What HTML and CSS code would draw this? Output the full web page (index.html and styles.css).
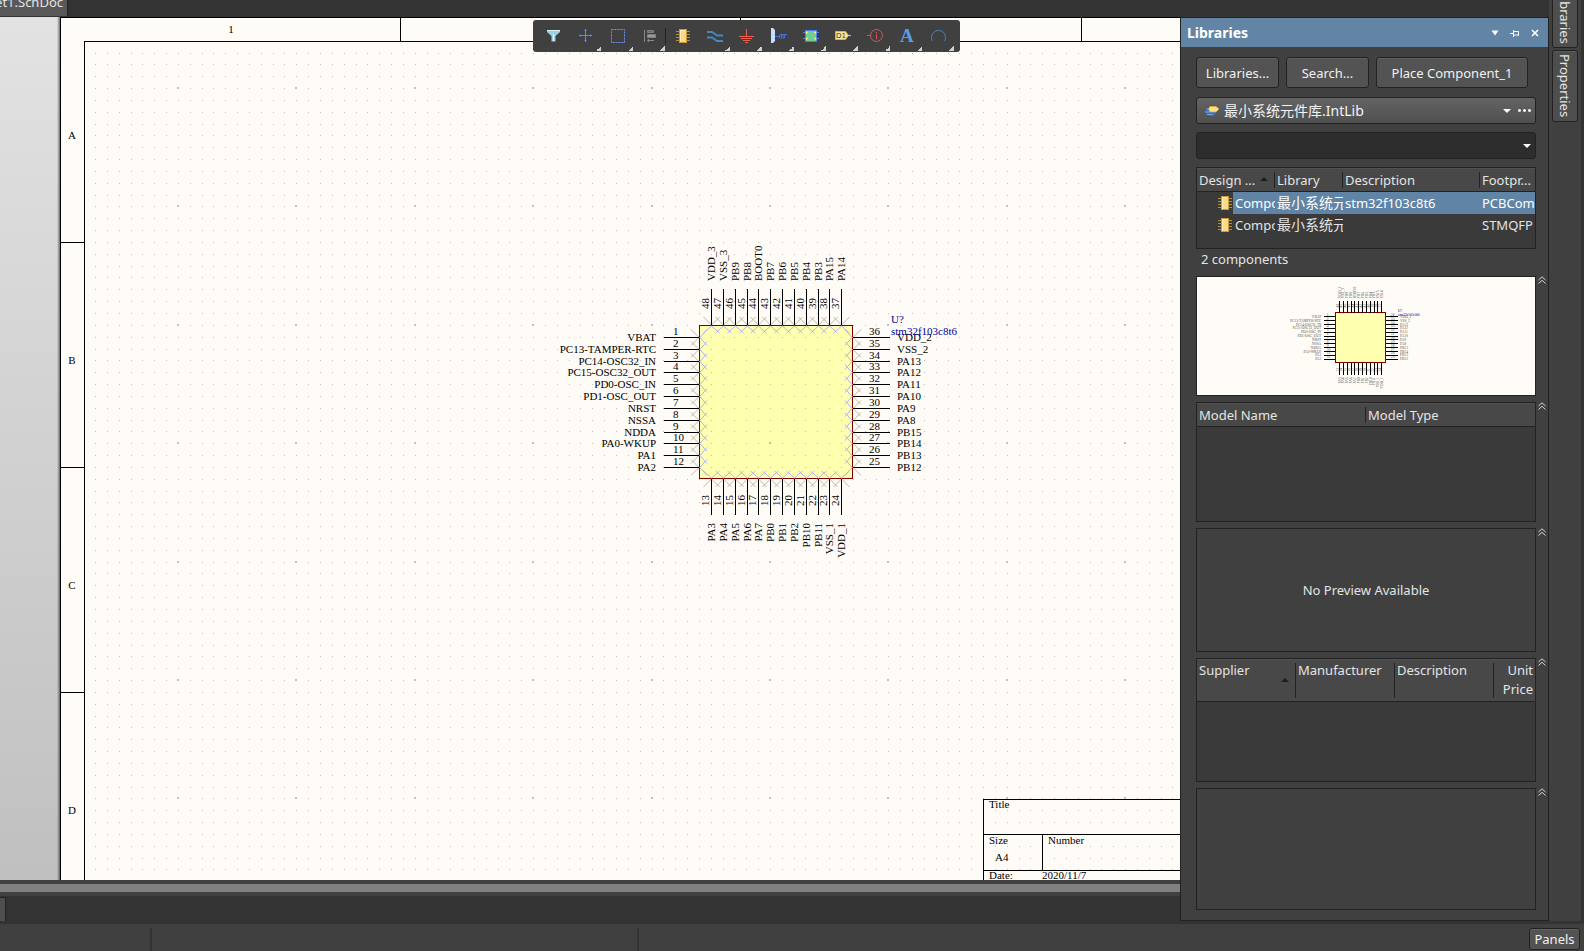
FILE: index.html
```html
<!DOCTYPE html>
<html lang="zh-CN">
<head>
<meta charset="utf-8">
<title>Schematic editor</title>
<link rel="stylesheet" href="styles.css">
</head>
<body>
<svg class="defs" aria-hidden="true">
  <symbol id="chip" viewBox="0 0 14 14">
    <path d="M0 2.5h14M0 5.5h14M0 8.5h14M0 11.5h14" stroke="#b08f35"/>
    <rect x="3.5" y=".5" width="7" height="13" fill="#fbd988" stroke="#c99a35"/>
    <path d="M4.5 13V1.500h5" fill="none" stroke="#ffedb8"/>
  </symbol>
  <symbol id="fold" viewBox="0 0 8 8">
    <path d="M.5 4L4 .8 7.500 4M.5 7.500L4 4.300 7.500 7.500" fill="none" stroke="#d4d4d4"/>
  </symbol>
</svg>
<div class="app">
  <div class="workspace">
    <main class="main">
      <div class="doc-tabs"><button class="doc-tab" type="button">et1.SchDoc</button></div>
      <div class="canvas">
        <svg class="sheet" id="sheet" role="img" aria-label="Schematic sheet"></svg>
        <div class="toolbar" role="toolbar" aria-label="Active bar">
          <button class="tool" type="button" aria-label="Filter"><svg viewBox="0 0 32 32"><path d="M10 10h13v2l-4.500 4v5.500h-4V16L10 12z" fill="#9fd0e2"/><path d="M10 10.500h13" stroke="#d9f2fa"/><path d="M16.500 14v7" stroke="#e4f8ff"/></svg></button>
          <button class="tool more" type="button" aria-label="Move"><svg viewBox="0 0 32 32"><path d="M10 15.500h13M16.500 9v13M15.500 10.500h2M15.500 20.500h2M11.500 14.500v2M21.500 14.500v2" stroke="#6488e8"/></svg></button>
          <button class="tool more" type="button" aria-label="Select area"><svg viewBox="0 0 32 32"><rect x="10.500" y="9.500" width="13" height="13" fill="none" stroke="#7391ee" stroke-dasharray="2 1"/></svg></button>
          <button class="tool more" type="button" aria-label="Align"><svg viewBox="0 0 32 32"><path d="M11.500 10v12" stroke="#858585"/><path d="M14.500 10.500h6v2h-6z" fill="#6c6c6c" stroke="#808080"/><path d="M14.500 14.500h8v3h-8z" fill="#999" stroke="#808080"/><path d="M14 20.500l2-2v1.500h5v1h-5v1.500z" fill="#8a8a8a"/></svg></button>
          <span class="tool-split"></span>
          <button class="tool" type="button" aria-label="Place part"><svg viewBox="0 0 32 32"><use href="#chip" x="10" y="9" width="14" height="14"/></svg></button>
          <button class="tool more" type="button" aria-label="Place wire"><svg viewBox="0 0 32 32"><path d="M9 12h5l5 3.500h6M9 17.500h5l5 3.500h6" fill="none" stroke="#4a86bd" stroke-width="2"/></svg></button>
          <button class="tool more" type="button" aria-label="Place ground"><svg viewBox="0 0 32 32"><path d="M16.500 9v7M9 16.500h15M11 18.500h11M13 20.500h7M15 22.500h3" stroke="#f0604f"/></svg></button>
          <button class="tool more" type="button" aria-label="Place harness"><svg viewBox="0 0 32 32"><path d="M9 8h2l2 2v11l-2 2H9z" fill="#c4dfff"/><path d="M13 16.500h4M17 18.500l1-4h2M19.500 18.500l1-4h2.500M22 18.500l1-4h2M20 14.500l-1 4M22.500 14.500l-1 4" fill="none" stroke="#4a70e0"/></svg></button>
          <button class="tool more" type="button" aria-label="Place sheet symbol"><svg viewBox="0 0 32 32"><path d="M9 12.500h3M9 18.500h3M22 12.500h3M22 18.500h3" stroke="#4d7df0"/><rect x="11.500" y="10.500" width="11" height="11" fill="#6fcf93" stroke="#4d7df0"/><path d="M12 11.500l2 1-2 1.500zM12 17.500l2 1-2 1.500zM22 11.500l-2 1 2 1.500zM22 17.500l-2 1 2 1.500z" fill="#ffe873" stroke="#ffe873" stroke-width=".4"/></svg></button>
          <button class="tool more" type="button" aria-label="Place port"><svg viewBox="0 0 32 32"><path d="M9.500 11.500h10l3 4-3 4h-10z" fill="#fbe596" stroke="#d9b04c"/><path d="M22 15.500h3" stroke="#e8c665"/><text x="10" y="18" class="tag-text">D1</text></svg></button>
          <button class="tool more" type="button" aria-label="Place directive"><svg viewBox="0 0 32 32"><circle cx="18.500" cy="15.500" r="6" fill="none" stroke="#d95353"/><path d="M9 15.500h4M18.500 12v1.500M18.500 14.500v4.500" stroke="#d95353"/></svg></button>
          <button class="tool more" type="button" aria-label="Place text"><svg viewBox="0 0 32 32"><text x="10" y="22" class="letter">A</text></svg></button>
          <button class="tool more" type="button" aria-label="Place arc"><svg viewBox="0 0 32 32"><path d="M10.500 21A7 7 0 1 1 22.500 21" fill="none" stroke="#4583bd"/></svg></button>
        </div>
      </div>
      <div class="scroll-strip"></div>
      <div class="editor-tabs"><span class="editor-tab"></span></div>
    </main>

    <aside class="panel">
      <header class="panel-head">
        <h1>Libraries</h1>
        <button type="button" aria-label="Menu"><svg viewBox="0 0 10 10"><path d="M1.500 2.500h7L5 7.500z" fill="#fff"/></svg></button>
        <button type="button" aria-label="Pin"><svg viewBox="0 0 10 10"><path d="M0 5.500h4M3.500 2v7M4 3.500h4.500v4M4 7h5" fill="none" stroke="#fff"/></svg></button>
        <button type="button" aria-label="Close"><svg viewBox="0 0 10 10"><path d="M2 2l6 6M8 2L2 8" stroke="#fff" stroke-width="1.600"/></svg></button>
      </header>
      <div class="panel-body">
        <div class="actions">
          <button class="btn" type="button">Libraries...</button>
          <button class="btn" type="button">Search...</button>
          <button class="btn btn-wide" type="button">Place Component_1</button>
        </div>
        <div class="combo combo-raised">
          <svg class="lib-icon" viewBox="0 0 15 12"><path d="M1 5c-1 3 1 6 5 6 3 0 5-1 5-3L4 4z" fill="#2f6fd0"/><path d="M1 4h4M0 7h5M2 9.500h6" stroke="#6ea6ee"/><path d="M5 1.500h6L14 4l-3 3H5L3.500 4z" fill="#ffe08a" stroke="#d9a53c" stroke-width=".8"/></svg>
          <select class="lib-select" aria-label="Library"><option>最小系统元件库.IntLib</option></select>
          <svg class="arrow" viewBox="0 0 8 4"><path d="M0 0h8L4 4z" fill="#fff"/></svg>
          <button class="dots" type="button" aria-label="More"><svg viewBox="0 0 13 3"><path d="M0 1l1-1h1l1 1v1l-1 1H1L0 2zM5 1l1-1h1l1 1v1l-1 1H6L5 2zM10 1l1-1h1l1 1v1l-1 1h-1l-1-1z" fill="#f2f2f2"/></svg></button>
        </div>
        <div class="combo">
          <input class="filter" type="text" aria-label="Component filter">
          <svg class="arrow" viewBox="0 0 8 4"><path d="M0 0h8L4 4z" fill="#fff"/></svg>
        </div>
        <div class="box box-list components">
          <table>
            <colgroup><col class="c-design"><col class="c-library"><col><col class="c-foot"></colgroup>
            <thead><tr><th>Design ...<svg class="sort" viewBox="0 0 8 4"><path d="M0 4h8L4 0z" fill="#1e1e1e"/></svg></th><th>Library</th><th>Description</th><th>Footpr...</th></tr></thead>
            <tbody>
              <tr class="selected"><td class="design"><div class="part"><svg viewBox="0 0 14 14"><use href="#chip"/></svg><span>Component_1</span></div></td><td class="cjk">最小系统元件库</td><td>stm32f103c8t6</td><td>PCBComponent_1</td></tr>
              <tr><td class="design"><div class="part"><svg viewBox="0 0 14 14"><use href="#chip"/></svg><span>Component_2</span></div></td><td class="cjk">最小系统元件库</td><td></td><td>STMQFP</td></tr>
            </tbody>
          </table>
        </div>
        <p class="count">2 components</p>
        <div class="sections">
          <section class="pane pane-120">
            <div class="box"><svg class="preview" id="preview" viewBox="276 216 1034 361" role="img" aria-label="Symbol preview"></svg></div>
            <button class="fold" type="button" aria-label="Collapse"><svg viewBox="0 0 8 8"><use href="#fold"/></svg></button>
          </section>
          <section class="pane pane-120">
            <div class="box box-list"><table><thead><tr><th>Model Name</th><th>Model Type</th></tr></thead></table></div>
            <button class="fold" type="button" aria-label="Collapse"><svg viewBox="0 0 8 8"><use href="#fold"/></svg></button>
          </section>
          <section class="pane pane-124">
            <div class="box box-empty">No Preview Available</div>
            <button class="fold" type="button" aria-label="Collapse"><svg viewBox="0 0 8 8"><use href="#fold"/></svg></button>
          </section>
          <section class="pane pane-124">
            <div class="box box-list suppliers">
              <table>
                <colgroup><col class="c-sup"><col class="c-sup"><col class="c-sup"><col></colgroup>
                <thead><tr><th>Supplier<svg class="sort" viewBox="0 0 8 4"><path d="M0 4h8L4 0z" fill="#1e1e1e"/></svg></th><th>Manufacturer</th><th>Description</th><th class="num">Unit Price</th></tr></thead>
              </table>
            </div>
            <button class="fold" type="button" aria-label="Collapse"><svg viewBox="0 0 8 8"><use href="#fold"/></svg></button>
          </section>
          <section class="pane pane-122">
            <div class="box"></div>
            <button class="fold" type="button" aria-label="Collapse"><svg viewBox="0 0 8 8"><use href="#fold"/></svg></button>
          </section>
        </div>
      </div>
    </aside>

    <nav class="rail">
      <button class="rail-tab rail-first" type="button">Libraries</button>
      <button class="rail-tab" type="button">Properties</button>
    </nav>
  </div>
  <footer class="status">
    <span class="cell cell-a"></span><span class="cell cell-b"></span>
    <button class="panels" type="button">Panels</button>
  </footer>
</div>
<script src="script.js"></script>
</body>
</html>
```

FILE: styles.css
```css
* { box-sizing: border-box; }
body { margin: 0; background: #333; color: #e4e4e4; font: 13px/18px "Noto Sans", "Noto Sans CJK SC", sans-serif; }
button, input, select { font: inherit; color: inherit; margin: 0; }
button { padding: 0; border: 0; background: none; }
svg { display: block; }
.defs { position: absolute; width: 0; height: 0; }

.app { display: flex; flex-direction: column; height: 100vh; overflow: hidden; }
.workspace { flex: 1; display: flex; min-height: 0; padding-right: 3px; }
.main { flex: 1; min-width: 0; display: flex; flex-direction: column; }

/* document tabs */
.doc-tabs { height: 17px; display: flex; align-items: flex-end; overflow: hidden; padding-bottom: 1px; }
.doc-tab { height: 24px; padding: 0 4px 4px 0; width: 68px; background: #595959; border-right: 1px solid #222; display: flex; justify-content: flex-end; align-items: center; white-space: nowrap; }

/* sheet */
.canvas { flex: 1; min-height: 0; position: relative; overflow: hidden; background: linear-gradient(#e2e2e2, #c0c0c0); }
.sheet { width: 100%; height: 100%; }
.sheet text, .preview text { font: 11px "Liberation Serif", serif; fill: #000; }
.preview text { fill: #555; }
.sheet .designator, .preview .designator { fill: #00009a; }
.end { text-anchor: end; }
.mid { text-anchor: middle; }
.paper { fill: #fffcf8; stroke: #000; shape-rendering: crispEdges; }
.line { fill: none; stroke: #000; shape-rendering: crispEdges; }
.dots-path { fill: #000; fill-opacity: .24; shape-rendering: crispEdges; }
.body { fill: #ffffb0; stroke: #800000; vector-effect: non-scaling-stroke; shape-rendering: crispEdges; }
.pin { stroke: #000; vector-effect: non-scaling-stroke; shape-rendering: crispEdges; fill: none; }
.cross { fill: none; stroke: #bdb9a6; stroke-width: 1; }
.cross-in { fill: none; stroke: #b4b4f0; stroke-width: 1; }

/* floating tool bar */
.toolbar { position: absolute; left: 533px; top: 3px; display: flex; height: 32px; padding: 0 6px 0 4px; background: #404040; border-radius: 3px; }
.tool { width: 32px; height: 32px; position: relative; }
.tool > svg { width: 32px; height: 32px; }
.tool.more::after { content: ""; position: absolute; right: 0; bottom: 1px; border: solid transparent; border-width: 5px 0 0 5px; width: 0; height: 0; background: linear-gradient(135deg, transparent 50%, #d0d0d0 50%) border-box; }
.tool-split { width: 1px; height: 16px; margin-top: 8px; background: #222; }
.tag-text { font: 7px "DejaVu Sans", sans-serif; fill: #3d3520; }
.letter { font: bold 19px "Liberation Serif", serif; fill: #5b9ce8; }

/* strips under the sheet */
.scroll-strip { height: 16px; background: #808080; border: solid #404040; border-width: 4px 0; }
.editor-tabs { height: 28px; padding: 1px 0 3px; display: flex; }
.editor-tab { width: 6px; background: #4f4f4f; border: solid #222; border-width: 1px 1px 0 0; }

/* libraries panel */
.panel { width: 369px; margin: 17px 0 3px; background: #404040; border: 1px solid #222; display: flex; flex-direction: column; }
.panel-head { height: 29px; flex: none; background: #6385a5; display: flex; align-items: center; gap: 10px; padding: 0 8px 0 6px; }
.panel-head h1 { flex: 1; margin: 0; font-size: 14px; line-height: 20px; color: #fff; }
.panel-head button, .panel-head svg { width: 10px; height: 10px; }
.panel-body { flex: 1; min-height: 0; padding: 10px 0 10px 15px; display: flex; flex-direction: column; }
.actions { display: flex; gap: 7px; margin-bottom: 9px; }
.btn { width: 83px; height: 31px; border: 1px solid #222; border-radius: 3px; background: #535353; box-shadow: inset 0 1px #606060; color: #f0f0f0; }
.btn-wide { width: 152px; }
.combo { height: 27px; flex: none; margin: 0 12px 8px 0; padding: 0 4px; display: flex; align-items: center; background: #2d2d2d; border: 1px solid #222; border-radius: 3px; gap: 7px; }
.combo-raised { background: linear-gradient(#636363, #505050); padding-left: 8px; }
.lib-icon { width: 15px; height: 12px; flex: none; }
.lib-select { flex: 1; min-width: 0; padding: 0; border: 0; background: none; appearance: none; outline: 0; font-size: 14px; line-height: 20px; color: #f4f4f4; margin-left: -3px; }
.arrow { width: 8px; height: 4px; flex: none; }
.dots svg { width: 13px; height: 3px; }
.filter { flex: 1; min-width: 0; border: 0; background: none; outline: 0; padding: 0; }

.box { flex: 1; min-width: 0; border: 1px solid #222; overflow: hidden; }
.box-list { background: #3a3a3a; }
.components { flex: none; height: 82px; margin-right: 12px; }
table { width: 100%; border-collapse: separate; border-spacing: 0; table-layout: fixed; }
th { position: relative; height: 24px; padding: 0 2px; text-align: left; font-weight: normal; background: #484848; border-bottom: 1px solid #222; box-shadow: inset 0 1px #515151; white-space: nowrap; }
th:not(:last-child)::after { content: ""; position: absolute; right: 0; top: 4px; bottom: 3px; width: 1px; background: #222; }
td { height: 22px; padding: 0 0 0 2px; overflow: hidden; white-space: nowrap; line-height: 20px; }
.c-design { width: 78px; }
.c-library { width: 68px; }
.c-foot { width: 55px; }
.c-sup { width: 99px; }
.cjk { font-size: 14px; }
.design { padding: 0; }
.part { display: flex; align-items: center; padding-left: 21px; height: 22px; }
.part svg { width: 14px; height: 14px; flex: none; margin-right: 1px; }
.part span { flex: 1; overflow: hidden; line-height: 22px; padding-left: 2px; }
.selected td:not(.design), .selected .part span { background: #6084a5; color: #fff; }
.sort { position: absolute; right: 7px; top: 9px; width: 8px; height: 4px; }
.suppliers th { height: 43px; vertical-align: top; padding-top: 2px; line-height: 19px; }
.suppliers .sort { top: 19px; }
.suppliers .num { text-align: right; white-space: normal; }
.count { margin: 0; padding: 0 0 0 5px; height: 27px; line-height: 20px; }

.sections { flex: 1; min-height: 0; display: flex; flex-direction: column; gap: 6px; }
.pane { display: flex; gap: 2px; padding-right: 2px; min-height: 0; }
.pane-120 { flex: 120 1 0; }
.pane-122 { flex: 122 1 0; }
.pane-124 { flex: 124 1 0; }
.box-empty { display: flex; align-items: center; justify-content: center; }
.preview { width: 100%; height: 100%; background: #fffcf8; }
.fold { align-self: flex-start; width: 8px; height: 8px; }
.fold svg { width: 8px; height: 8px; }

/* right rail */
.rail { width: 32px; margin-bottom: 3px; background: #404040; display: flex; flex-direction: column; gap: 2px; padding-left: 3px; overflow: hidden; }
.rail-tab { writing-mode: vertical-rl; width: 26px; height: 72px; background: #4e4e4e; border: 1px solid #222; border-radius: 3px; box-shadow: inset 0 1px #5c5c5c; }
.rail-first { margin-top: -24px; padding-top: 10px; flex: none; }

/* status bar */
.status { height: 27px; flex: none; background: #404040; display: flex; align-items: flex-end; padding-right: 4px; }
.cell { height: 23px; border-right: 2px solid #333; }
.cell-a { width: 152px; }
.cell-b { width: 487px; }
.panels { margin: 0 0 1px auto; width: 51px; height: 22px; border: 1px solid #222; border-radius: 3px; background: #535353; box-shadow: inset 0 1px #636363; color: #f0f0f0; }
```

FILE: script.js
```javascript
const NS = "http://www.w3.org/2000/svg";

function add(parent, tag, attrs, text) {
  const el = document.createElementNS(NS, tag);
  for (const key in attrs) el.setAttribute(key, attrs[key]);
  if (text !== undefined) el.textContent = text;
  parent.appendChild(el);
  return el;
}

const PITCH = 11.84;
const names = {
  left: ["VBAT", "PC13-TAMPER-RTC", "PC14-OSC32_IN", "PC15-OSC32_OUT", "PD0-OSC_IN", "PD1-OSC_OUT", "NRST", "NSSA", "NDDA", "PA0-WKUP", "PA1", "PA2"],
  bottom: ["PA3", "PA4", "PA5", "PA6", "PA7", "PB0", "PB1", "PB2", "PB10", "PB11", "VSS_1", "VDD_1"],
  right: ["VDD_2", "VSS_2", "PA13", "PA12", "PA11", "PA10", "PA9", "PA8", "PB15", "PB14", "PB13", "PB12"],
  top: ["VDD_3", "VSS_3", "PB9", "PB8", "BOOT0", "PB7", "PB6", "PB5", "PB4", "PB3", "PA15", "PA14"]
};
const body = { x: 699, y: 325, size: 153 };

function upright(g, x, y, cls, text) {
  add(g, "text", { transform: `translate(${x} ${y}) rotate(-90)`, class: cls }, text);
}

/* The microcontroller symbol: body, 48 pins, names and numbers. */
function drawPart(g) {
  const right = body.x + body.size, bottom = body.y + body.size;
  add(g, "rect", { x: body.x + .5, y: body.y + .5, width: body.size, height: body.size, class: "body" });
  let pins = "";
  for (let i = 0; i < 12; i++) {
    const y = Math.round(336.9 + i * PITCH), x = Math.round(711 + i * PITCH);
    pins += `M664 ${y + .5}H${body.x}M${right + 1} ${y + .5}H890`;
    pins += `M${x + .5} 289V${body.y}M${x + .5} ${bottom + 1}V515`;
    add(g, "text", { x: 656, y: y + 4, class: "end" }, names.left[i]);
    add(g, "text", { x: 673, y: y - 2 }, i + 1);
    add(g, "text", { x: 897, y: y + 4 }, names.right[i]);
    add(g, "text", { x: 869, y: y - 2 }, 36 - i);
    upright(g, x + 4, 281, "", names.top[i]);
    upright(g, x - 2, 309, "", 48 - i);
    upright(g, x + 4, 523, "end", names.bottom[i]);
    upright(g, x - 2, 506, "", 13 + i);
  }
  add(g, "path", { d: pins, class: "pin" });
  add(g, "text", { x: 891, y: 323, class: "designator" }, "U?");
  add(g, "text", { x: 891, y: 335, class: "designator" }, "stm32f103c8t6");
}

/* Unconnected-pin crosses: tan outside the body, lavender inside. */
function drawCrosses(g) {
  const right = body.x + body.size, bottom = body.y + body.size;
  let outer = "", inner = "";
  const chevronH = (x, y, dx) => `M${x + dx} ${y - 8}L${x} ${y}L${x + dx} ${y + 8}`;
  const chevronV = (x, y, dy) => `M${x - 8} ${y + dy}L${x} ${y}L${x + 8} ${y + dy}`;
  for (let i = 0; i < 12; i++) {
    const y = Math.round(336.9 + i * PITCH) + .5, x = Math.round(711 + i * PITCH) + .5;
    outer += chevronH(body.x, y, -8) + chevronH(right + 1, y, 8) + chevronV(x, body.y, -8) + chevronV(x, bottom + 1, 8);
    inner += chevronH(body.x + 1, y, 7) + chevronH(right, y, -7) + chevronV(x, body.y + 1, 7) + chevronV(x, bottom, -7);
  }
  add(g, "path", { d: outer, class: "cross" });
  add(g, "path", { d: inner, class: "cross-in" });
}

/* Sheet origin is shifted by the height of the document tabs. */
function drawSheet(svg) {
  const defs = add(svg, "defs", {});
  const shade = add(defs, "linearGradient", { id: "shade" });
  add(shade, "stop", { offset: 0, "stop-color": "#000", "stop-opacity": 0 });
  add(shade, "stop", { offset: 1, "stop-color": "#000", "stop-opacity": .5 });
  const g = add(svg, "g", { transform: "translate(0 -17)" });
  add(g, "rect", { x: 57, y: 17, width: 3, height: 900, fill: "url(#shade)" });
  add(g, "rect", { x: 60.5, y: 17.5, width: 1361, height: 900, class: "paper" });
  add(g, "rect", { x: 84.5, y: 41.5, width: 1313, height: 852, class: "line" });
  add(g, "path", { d: "M400.5 17V41M740.5 17V41M1081.5 17V41M60 242.5H84M60 467.5H84M60 692.5H84", class: "line" });
  add(g, "text", { x: 231, y: 33, class: "mid" }, "1");
  ["A", "B", "C", "D"].forEach((t, i) => add(g, "text", { x: 72, y: 139 + 225 * i, class: "mid" }, t));
  const part = add(g, "g", {});
  drawPart(part);
  const crosses = add(part, "g", {});
  drawCrosses(crosses);
  part.insertBefore(crosses, part.querySelector(".body").nextSibling);
  let dots = "";
  for (let r = -3; r < 68; r++) {
    for (let c = -7; c < 103; c++) {
      const x = Math.round(177.9 + c * PITCH), y = Math.round(88.05 + r * PITCH);
      dots += r % 10 === 0 && c % 10 === 0 ? `M${x - 1} ${y - 1}h2v2h-2z` : `M${x} ${y}h1v1h-1z`;
    }
  }
  add(g, "path", { d: dots, class: "dots-path" });
  add(g, "path", { d: "M983.5 893V799.5H1397M983 834.5H1397M983 870.5H1397M1042.5 834V870", class: "line" });
  [[989, 808, "Title"], [989, 844, "Size"], [1048, 844, "Number"], [995, 861, "A4"], [989, 879, "Date:"], [1042, 879, "2020/11/7"]]
    .forEach(([x, y, t]) => add(g, "text", { x, y }, t));
}

drawSheet(document.getElementById("sheet"));
drawPart(document.getElementById("preview"));
```
